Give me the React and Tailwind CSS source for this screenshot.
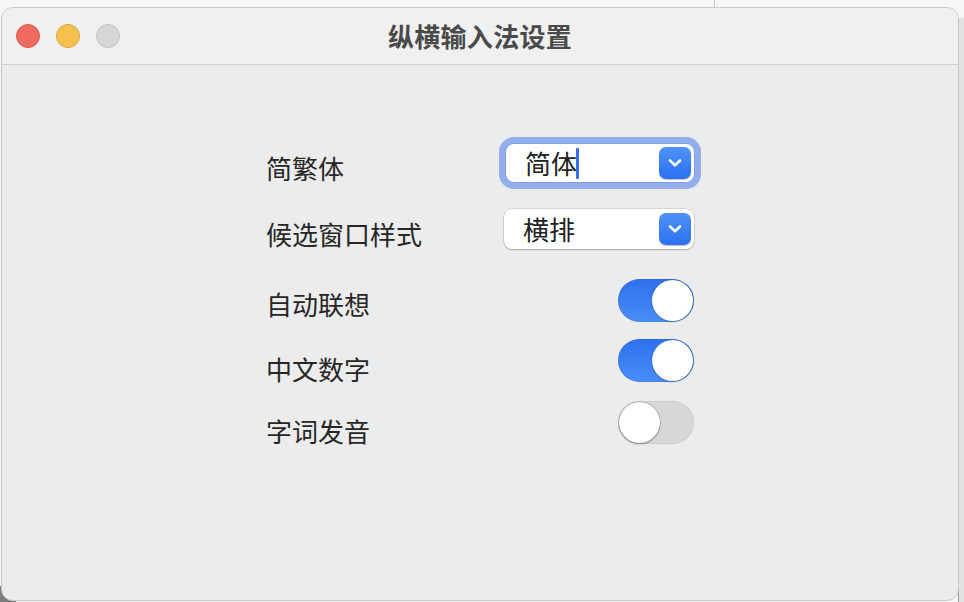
import React from "react";

const font = { fontFamily: '"Noto Sans CJK SC", "Noto Sans", sans-serif' };

function Chevron() {
  return (
    <div className="flex h-[32px] w-[32px] items-center justify-center rounded-[7px] bg-gradient-to-b from-[#4f92f8] to-[#2c6ff1] shadow-[0_0.5px_1px_rgba(0,0,0,0.25)]">
      <svg width="16" height="10" viewBox="0 0 16 10" fill="none">
        <path d="M3 2.5 L8 7.2 L13 2.5" stroke="white" strokeWidth="2.6" strokeLinecap="round" strokeLinejoin="round" />
      </svg>
    </div>
  );
}

function Popup({ text, focused }) {
  return (
    <div
      className={
        "flex items-center justify-between rounded-[8px] bg-white pl-[19px] pr-[3px] " +
        (focused
          ? "h-[38px] w-[188px] shadow-[0_0_0_1px_#7f9fe6,0_0_0_7px_#93aeec]"
          : "h-[40px] w-[190px] shadow-[0_0_0_0.5px_rgba(0,0,0,0.18),0_1px_1.5px_rgba(0,0,0,0.22)]")
      }
    >
      <div className="flex items-center">
        <span className="text-[26px] leading-[26px] text-[#222]">{text}</span>
        {focused && <span className="ml-[-1px] h-[31px] w-[3px] rounded-[1px] bg-[#3a6fea]" />}
      </div>
      <Chevron />
    </div>
  );
}

function Toggle({ on }) {
  return on ? (
    <div className="flex h-[43px] w-[76px] items-center justify-end rounded-full bg-gradient-to-b from-[#2f70ec] to-[#4a8df8] pr-[1px] shadow-[inset_0_0_0_0.5px_rgba(0,0,0,0.12)]">
      <div className="h-[41px] w-[41px] rounded-full bg-white shadow-[0_0.5px_2px_rgba(0,0,0,0.35)]" />
    </div>
  ) : (
    <div className="flex h-[43px] w-[76px] items-center justify-start rounded-full bg-[#d7d7d7] pl-[1px] shadow-[inset_0_0_0_0.5px_rgba(0,0,0,0.1)]">
      <div className="h-[41px] w-[41px] rounded-full bg-white shadow-[0_0_0_0.5px_rgba(0,0,0,0.25),0_1px_2px_rgba(0,0,0,0.35)]" />
    </div>
  );
}

function Row({ label, h, labelTop, ctrlTop, children }) {
  return (
    <div className="flex items-start justify-between" style={{ height: h }}>
      <span className="text-[26px] leading-[26px] text-[#262626]" style={{ marginTop: labelTop }}>
        {label}
      </span>
      <div style={{ marginTop: ctrlTop }}>{children}</div>
    </div>
  );
}

export default function App() {
  return (
    <div className="relative h-[602px] w-[964px] overflow-hidden bg-[#f6f6f6]" style={font}>
      {/* background window edge on the right */}
      <div className="absolute right-0 top-[18px] h-[584px] w-[6px] bg-[#e2e2e2] border-l border-[#9a9a9a]" />
      <div className="absolute left-[697px] top-0 h-[8px] w-[18px] border-r border-[#c8c8c8]" />
      {/* dark desktop area behind bottom-left corner */}
      <div className="absolute bottom-0 left-0 h-[16px] w-[16px] bg-[#7c7c7c]" />

      <div className="relative z-10 ml-[1px] mt-[7px] flex h-[594px] w-[958px] flex-col overflow-hidden rounded-[12px] border border-[#c9c9c9] bg-[#ececec]">
        {/* title bar */}
        <div className="grid h-[57px] shrink-0 grid-cols-[1fr_auto_1fr] items-center border-b border-[#d2d2d2] bg-[#f0f0f0]">
          <div className="flex items-center gap-[16px] pl-[14px]">
            <div className="h-[24px] w-[24px] rounded-full border border-[#dd5a50] bg-[#ef6a5f]" />
            <div className="h-[24px] w-[24px] rounded-full border border-[#dea43c] bg-[#f6c04f]" />
            <div className="h-[24px] w-[24px] rounded-full border border-[#c2c2c2] bg-[#d7d7d7]" />
          </div>
          <div className="text-[26px] font-bold leading-[26px] tracking-[0.3px] text-[#4a4a4a]">纵横输入法设置</div>
          <div />
        </div>

        {/* body */}
        <div className="ml-[264px] w-[428px] pt-[72px]">
          <Row label="简繁体" h={66} labelTop={18} ctrlTop={7}>
            <Popup text="简体" focused />
          </Row>
          <Row label="候选窗口样式" h={72} labelTop={18} ctrlTop={6}>
            <Popup text="横排" />
          </Row>
          <Row label="自动联想" h={60} labelTop={16} ctrlTop={4}>
            <Toggle on />
          </Row>
          <Row label="中文数字" h={62} labelTop={21} ctrlTop={4}>
            <Toggle on />
          </Row>
          <Row label="字词发音" h={62} labelTop={21} ctrlTop={4}>
            <Toggle on={false} />
          </Row>
        </div>
      </div>
    </div>
  );
}
